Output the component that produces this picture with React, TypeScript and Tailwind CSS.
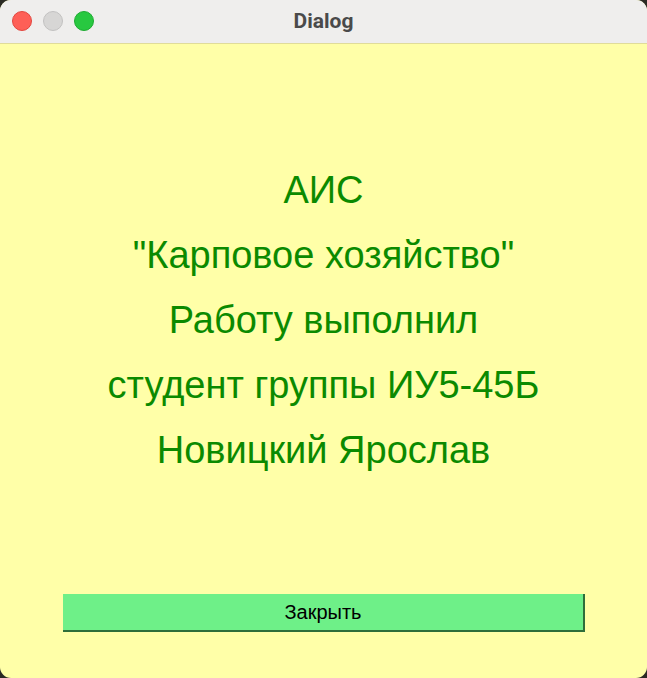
import React from "react";

const lines = [
  "АИС",
  "\"Карповое хозяйство\"",
  "Работу выполнил",
  "студент группы ИУ5-45Б",
  "Новицкий Ярослав",
];

const App: React.FC = () => {
  return (
    <div className="w-[647px] h-[678px] bg-[#2a2a24]">
      <div className="w-full h-full flex flex-col rounded-[11px] overflow-hidden bg-[#ffffa8] font-['Liberation_Sans',Arial,sans-serif]">
        {/* title bar */}
        <div className="relative h-[44px] shrink-0 flex items-center justify-center bg-[#efeeed] border-b border-[#e0dc9a]">
          <div className="absolute left-[12px] top-[11px] flex gap-[11px]">
            <span className="w-[20px] h-[20px] rounded-full bg-[#fe5f57] border border-[#e2463f]" />
            <span className="w-[20px] h-[20px] rounded-full bg-[#d7d6d5] border border-[#c2c1c0]" />
            <span className="w-[20px] h-[20px] rounded-full bg-[#28c840] border border-[#1eaa32]" />
          </div>
          <span className="text-[21px] font-bold text-[#4a4a4a] font-['Roboto',sans-serif]">Dialog</span>
        </div>

        {/* content */}
        <div className="flex flex-col items-center pt-[113px]">
          {lines.map((t) => (
            <div key={t} className="h-[65px] flex items-center text-[38px] leading-none text-[#0b8a00]">
              {t}
            </div>
          ))}
        </div>

        <div className="px-[63px] pt-[112px]">
          <button className="w-[522px] h-[38px] bg-[#6ef088] border-r-2 border-b-2 border-[#2f6e3a] text-[20px] text-black flex items-center justify-center">
            Закрыть
          </button>
        </div>
      </div>
    </div>
  );
};

export default App;
